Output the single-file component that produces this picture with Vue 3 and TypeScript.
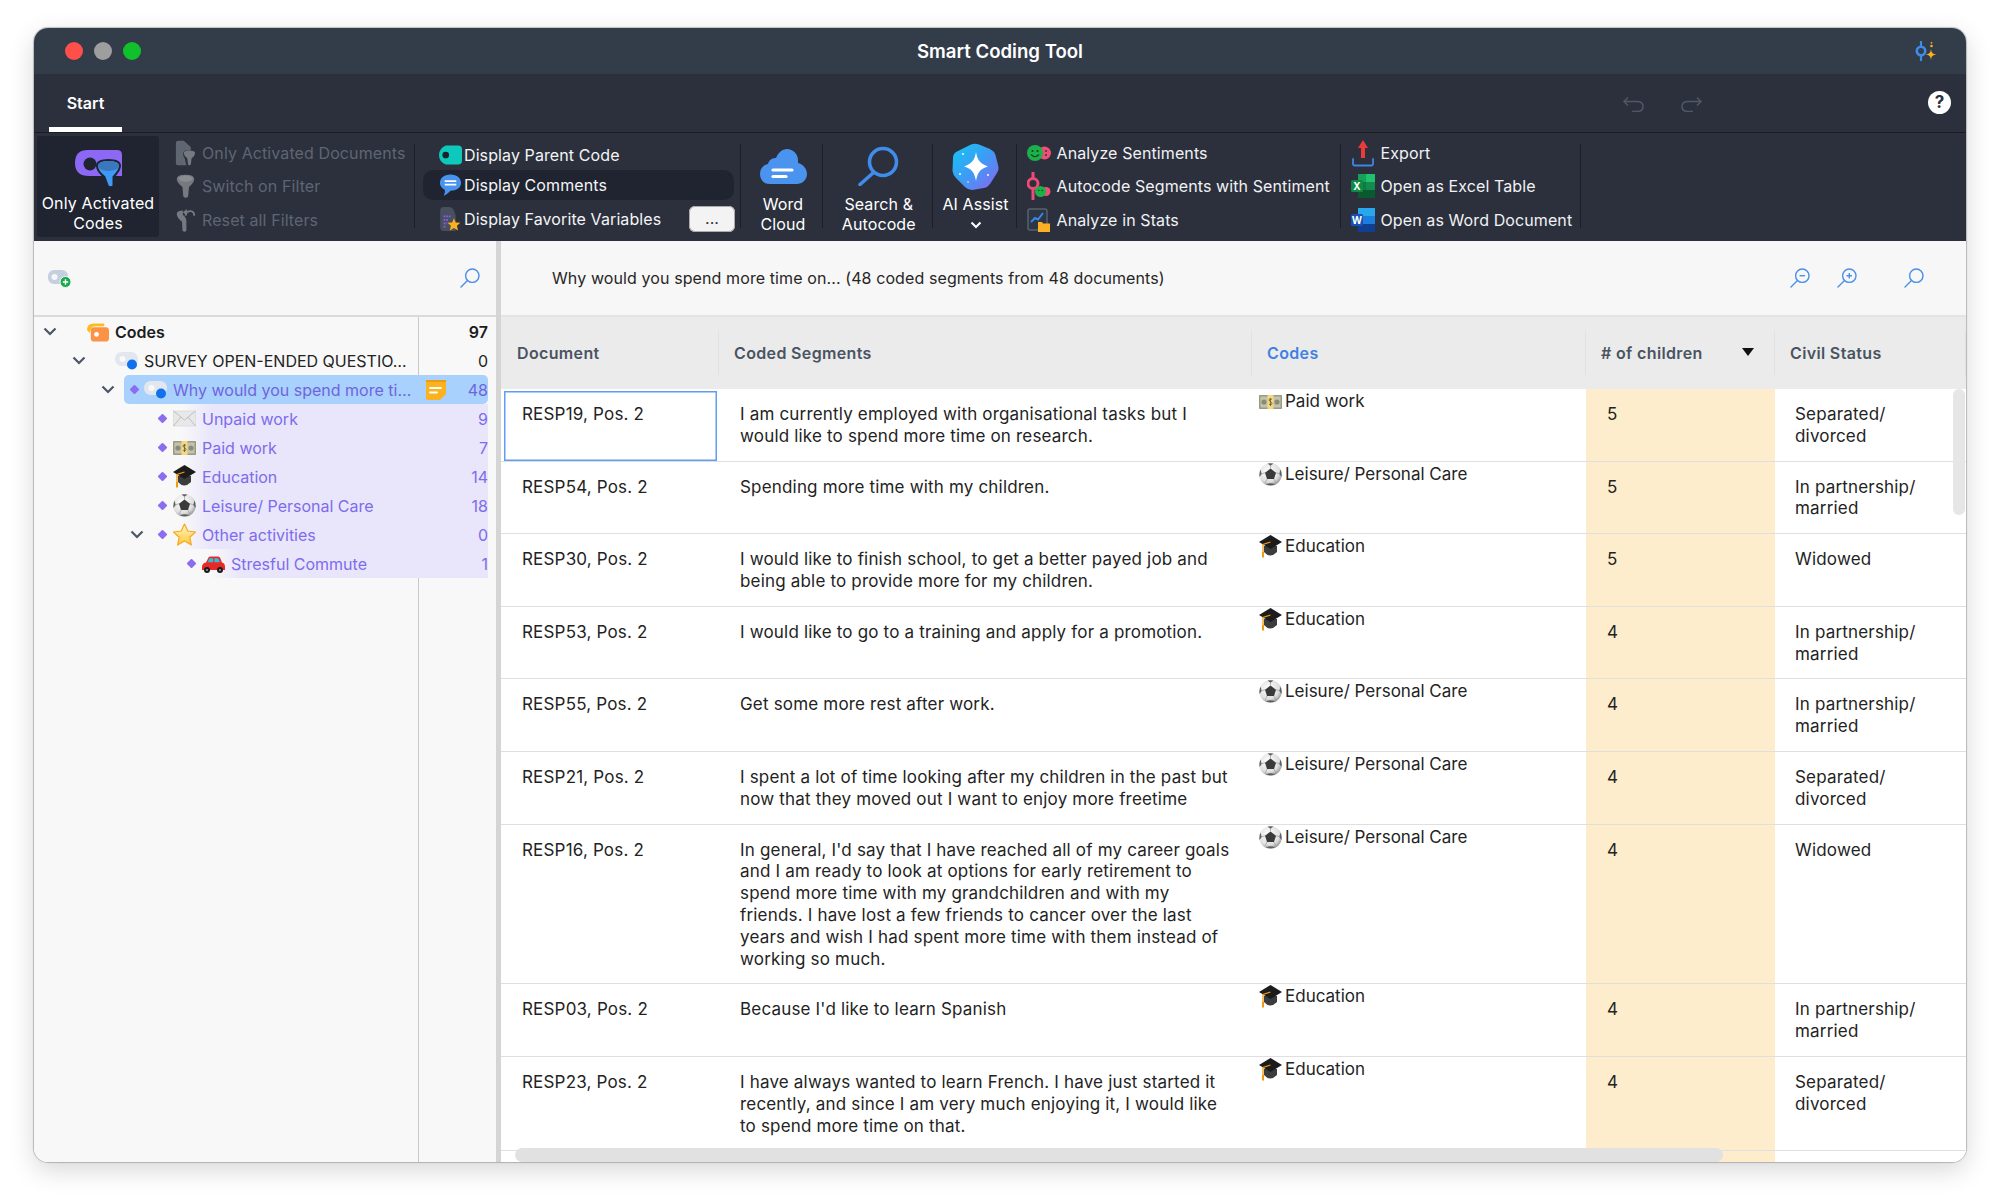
<script setup lang="ts">
interface Row { doc: string; text: string; code: string; icon: string; n: number; civil: string }
interface Node { label: string; level: number; icon: string; count: number; chevron?: boolean; diamond?: boolean; kind?: string; note?: boolean }

const rows: Row[] = [
  { doc: 'RESP19, Pos. 2', text: 'I am currently employed with organisational tasks but I would like to spend more time on research.', code: 'Paid work', icon: 'money', n: 5, civil: 'Separated/ divorced' },
  { doc: 'RESP54, Pos. 2', text: 'Spending more time with my children.', code: 'Leisure/ Personal Care', icon: 'ball', n: 5, civil: 'In partnership/ married' },
  { doc: 'RESP30, Pos. 2', text: 'I would like to finish school, to get a better payed job and being able to provide more for my children.', code: 'Education', icon: 'cap', n: 5, civil: 'Widowed' },
  { doc: 'RESP53, Pos. 2', text: 'I would like to go to a training and apply for a promotion.', code: 'Education', icon: 'cap', n: 4, civil: 'In partnership/ married' },
  { doc: 'RESP55, Pos. 2', text: 'Get some more rest after work.', code: 'Leisure/ Personal Care', icon: 'ball', n: 4, civil: 'In partnership/ married' },
  { doc: 'RESP21, Pos. 2', text: 'I spent a lot of time looking after my children in the past but now that they moved out I want to enjoy more freetime', code: 'Leisure/ Personal Care', icon: 'ball', n: 4, civil: 'Separated/ divorced' },
  { doc: 'RESP16, Pos. 2', text: "In general, I'd say that I have reached all of my career goals and I am ready to look at options for early retirement to spend more time with my grandchildren and with my friends.  I have lost a few friends to cancer over the last years and wish I had spent more time with them instead of working so much.", code: 'Leisure/ Personal Care', icon: 'ball', n: 4, civil: 'Widowed' },
  { doc: 'RESP03, Pos. 2', text: "Because I'd like to learn Spanish", code: 'Education', icon: 'cap', n: 4, civil: 'In partnership/ married' },
  { doc: 'RESP23, Pos. 2', text: 'I have always wanted to learn French. I have just started it recently, and since I am very much enjoying it, I would like to spend more time on that.', code: 'Education', icon: 'cap', n: 4, civil: 'Separated/ divorced' },
]

const nodes: Node[] = [
  { label: 'Codes', level: 0, icon: 'codes', count: 97, chevron: true, kind: 'root' },
  { label: 'SURVEY OPEN-ENDED QUESTIO…', level: 1, icon: 'tagdot', count: 0, chevron: true, kind: 'plain' },
  { label: 'Why would you spend more ti…', level: 2, icon: 'tagdot', count: 48, chevron: true, diamond: true, kind: 'sel', note: true },
  { label: 'Unpaid work', level: 3, icon: 'mail', count: 9, diamond: true, kind: 'act' },
  { label: 'Paid work', level: 3, icon: 'money', count: 7, diamond: true, kind: 'act' },
  { label: 'Education', level: 3, icon: 'cap', count: 14, diamond: true, kind: 'act' },
  { label: 'Leisure/ Personal Care', level: 3, icon: 'ball', count: 18, diamond: true, kind: 'act' },
  { label: 'Other activities', level: 3, icon: 'star', count: 0, chevron: true, diamond: true, kind: 'act' },
  { label: 'Stresful Commute', level: 4, icon: 'car', count: 1, diamond: true, kind: 'act' },
]

const filterItems = [
  { icon: 'docfilter', label: 'Only Activated Documents' },
  { icon: 'filter', label: 'Switch on Filter' },
  { icon: 'resetfilter', label: 'Reset all Filters' },
]
const analyzeItems = [
  { icon: 'sentiment', label: 'Analyze Sentiments' },
  { icon: 'autosent', label: 'Autocode Segments with Sentiment' },
  { icon: 'stats', label: 'Analyze in Stats' },
]
const exportItems = [
  { icon: 'export', label: 'Export', letter: '' },
  { icon: 'excel', label: 'Open as Excel Table', letter: 'X' },
  { icon: 'word', label: 'Open as Word Document', letter: 'W' },
]
</script>

<template>
  <div class="page">
    <svg class="defs" aria-hidden="true">
      <defs>
        <linearGradient id="aiGrad" x1="0" y1="0" x2="1" y2="1">
          <stop offset="0" stop-color="#12c6f4" />
          <stop offset=".5" stop-color="#3d9cf5" />
          <stop offset="1" stop-color="#8d62f0" />
        </linearGradient>
        <radialGradient id="ballGrad" cx=".4" cy=".35" r=".75">
          <stop offset="0" stop-color="#ffffff" />
          <stop offset=".65" stop-color="#dedede" />
          <stop offset="1" stop-color="#7f7f7f" />
        </radialGradient>
        <linearGradient id="starGrad" x1="0" y1="0" x2="0" y2="1">
          <stop offset="0" stop-color="#fff6c4" />
          <stop offset="1" stop-color="#fdc83a" />
        </linearGradient>
      </defs>
      <symbol id="activated" viewBox="0 0 47 37">
        <path d="M13 0H42Q47 0 47 5V26H14Q0 26 0 13Q0 0 13 0Z" fill="#8c68f5" />
        <circle cx="15" cy="14" r="6.5" fill="#1f2430" />
        <path d="M22 16Q22 10 33.5 10Q45 10 45 16Q45 20 38.5 27V36Q36 38 33 36.500L29.500 27Q22 21 22 16Z" fill="#3f9af6" stroke="#1f2430" stroke-width="2" />
        <ellipse cx="33.500" cy="16" rx="10.500" ry="5" fill="#3a77bd" />
      </symbol>
      <symbol id="filter" viewBox="0 0 24 28">
        <path d="M2 6Q2 1 12 1Q22 1 22 6Q22 10 16 15L15 26Q12 29 9.500 26L8.500 15Q2 10 2 6Z" fill="#767a80" />
        <ellipse cx="12" cy="5.500" rx="8" ry="3.500" fill="#8a8d92" />
      </symbol>
      <symbol id="docfilter" viewBox="0 0 24 28">
        <path d="M1 3Q1 0 4 0H10L18 7V11H12Q7 13 11 20L13 28H4Q1 28 1 25Z" fill="#5f6672" />
        <path d="M10 14Q10 11 16 11Q23 11 23 14Q23 17 19 20L18 27Q16 29 15 27L14 20Q10 17 10 14Z" fill="#767a80" />
      </symbol>
      <symbol id="resetfilter" viewBox="0 0 24 28">
        <path d="M2 7Q2 3 9 3L9 8Q12 10 13 14L13 26Q11 29 8.500 26L8 16Q2 11 2 7Z" fill="#767a80" />
        <path d="M12 9Q13 3 19 4Q22 5 22 9" fill="none" stroke="#767a80" stroke-width="2" />
        <path d="M9 5L13.500 1.500V9Z" fill="#767a80" />
      </symbol>
      <symbol id="parent" viewBox="0 0 24 20">
        <path d="M7 0H20Q24 0 24 4V16Q24 20 20 20H7Q0 17 0 10Q0 3 7 0Z" fill="#0ec9bb" />
        <circle cx="7" cy="10" r="3.500" fill="#17232b" />
      </symbol>
      <symbol id="comments" viewBox="0 0 24 24">
        <path d="M12 1C19 1 23 5 23 10S18 18 12 18C10 20 7 23 5 23C6 21 6.500 19 6 17C2 15 1 12 1 10C1 5 5 1 12 1Z" fill="#4893f0" />
        <path d="M6 8H18M6 11.500H18" stroke="#fff" stroke-width="1.800" />
      </symbol>
      <symbol id="favvars" viewBox="0 0 24 28">
        <path d="M0 4Q0 0 4 0H10Q14 0 16 4L18 10V28H4Q0 28 0 24Z" fill="#485060" />
        <path d="M4 11H12M4 15H10M4 19H8M4 23H6" stroke="#8a5ce8" stroke-width="2" stroke-dasharray="2 1" />
        <path d="M16 13L18 18L23.500 18.500L19.500 22L20.800 27.500L16 24.500L11.200 27.500L12.500 22L8.500 18.500L14 18Z" fill="#fcb01e" />
      </symbol>
      <symbol id="cloud" viewBox="0 0 47 35">
        <path d="M10 35C4 35 0 31 0 25C0 20 3 16 8 15C9 11 12 9 16 9C18 4 22 0 27 0C33 0 38 5 38 11L38 14C43 15 47 20 47 25C47 31 42 35 37 35Z" fill="#4a93ee" />
        <path d="M13 21H32" stroke="#fff" stroke-width="3.200" stroke-linecap="round" />
        <path d="M13 27.500H26" stroke="#fff" stroke-width="3.200" stroke-linecap="round" />
      </symbol>
      <symbol id="bigsearch" viewBox="0 0 41 40">
        <circle cx="25" cy="16" r="13.500" fill="none" stroke="#3f8ceb" stroke-width="3.600" />
        <path d="M15 27L2 38.500" stroke="#3f8ceb" stroke-width="3.600" stroke-linecap="round" />
      </symbol>
      <symbol id="ai" viewBox="0 0 47 47">
        <path d="M19 1.500Q23 0 27 1.500L38 6Q42 8 43.500 12L46.500 24Q47 27 45 30L38 41Q36 44 32 45L20 47Q16 47 13 44L4 35Q1 32 .5 28L1 15Q1 11 4 9Z" fill="url(#aiGrad)" />
        <path d="M24 9C25.500 17 27.500 20 36 23.500C27.500 26 25.500 30 24 38C22.500 30 20.500 26 12 23.500C20.500 20 22.500 17 24 9Z" fill="#fff" />
        <circle cx="11" cy="11" r="1" fill="#fff" />
        <circle cx="36" cy="32" r="1" fill="#fff" />
        <circle cx="8" cy="31" r="1" fill="#fff" />
        <circle cx="16" cy="39" r=".800" fill="#fff" />
      </symbol>
      <symbol id="sentiment" viewBox="0 0 24 17">
        <circle cx="17.500" cy="8.500" r="6.500" fill="#ef4f74" />
        <circle cx="19" cy="6.500" r=".9" fill="#2b303c" />
        <circle cx="19" cy="10.500" r=".9" fill="#2b303c" />
        <circle cx="8" cy="8.500" r="8" fill="#1cb04a" />
        <circle cx="5.500" cy="6.500" r="1.100" fill="#11461f" />
        <circle cx="10.500" cy="6.500" r="1.100" fill="#11461f" />
        <path d="M4 10Q8 14.500 12 10" fill="none" stroke="#11461f" stroke-width="1.200" />
      </symbol>
      <symbol id="autosent" viewBox="0 0 24 28">
        <path d="M6 0V6M6 17V27" stroke="#ed4a77" stroke-width="3" stroke-linecap="round" />
        <circle cx="6" cy="11.500" r="5" fill="none" stroke="#ed4a77" stroke-width="3" />
        <circle cx="19" cy="19.500" r="4.500" fill="#ef4f74" />
        <circle cx="13.500" cy="19.500" r="5.500" fill="#1cb04a" />
        <circle cx="11.800" cy="18.500" r=".8" fill="#11461f" />
        <circle cx="15.200" cy="18.500" r=".8" fill="#11461f" />
      </symbol>
      <symbol id="stats" viewBox="0 0 24 24">
        <rect x="1" y="1" width="19" height="21" rx="2" fill="#2c3644" stroke="#58606e" stroke-width="1.500" />
        <path d="M4 14L8 10L11 11.500L16 5" fill="none" stroke="#3d86e6" stroke-width="2" />
        <path d="M11 14H15L16 15.500H23V24H11Z" fill="#fcb124" />
      </symbol>
      <symbol id="export" viewBox="0 0 24 28">
        <path d="M12 1L17 9H14V19H10V9H7Z" fill="#ea3b3b" />
        <path d="M2 20V25Q2 26.500 3.500 26.500H20.500Q22 26.500 22 25V20" fill="none" stroke="#3f86e4" stroke-width="1.800" stroke-linecap="round" />
      </symbol>
      <symbol id="excel" viewBox="0 0 24 28">
        <path d="M7 4Q7 2 9 2H22Q24 2 24 4V24Q24 26 22 26H9Q7 26 7 24Z" fill="#107c41" />
        <rect x="15" y="2" width="9" height="8" fill="#21c26f" />
        <rect x="7" y="2" width="8" height="8" fill="#17a05a" />
        <rect x="15" y="10" width="9" height="8" fill="#138a4e" />
        <rect x="7" y="18" width="17" height="8" fill="#0a5a30" />
        <rect x="0" y="8" width="12" height="12" rx="1.500" fill="#0e8a46" />
      </symbol>
      <symbol id="word" viewBox="0 0 24 28">
        <path d="M7 4Q7 2 9 2H22Q24 2 24 4V24Q24 26 22 26H9Q7 26 7 24Z" fill="#185abd" />
        <rect x="7" y="2" width="17" height="8" fill="#28a8ea" />
        <rect x="7" y="10" width="17" height="8" fill="#1a7fdc" />
        <rect x="7" y="18" width="17" height="8" fill="#103f91" />
        <rect x="0" y="8" width="12" height="12" rx="1.500" fill="#1551b8" />
      </symbol>
      <symbol id="search" viewBox="0 0 20 20">
        <circle cx="12.300" cy="7.700" r="6.700" fill="none" stroke="#4a8fe8" stroke-width="1.400" />
        <path d="M7.500 12.500L1 19" stroke="#4a8fe8" stroke-width="1.400" stroke-linecap="round" />
      </symbol>
      <symbol id="zoomout" viewBox="0 0 20 20">
        <circle cx="12.300" cy="7.700" r="6.700" fill="none" stroke="#4a8fe8" stroke-width="1.400" />
        <path d="M7.500 12.500L1 19" stroke="#4a8fe8" stroke-width="1.400" stroke-linecap="round" />
        <path d="M9.500 7.700H15" stroke="#4a8fe8" stroke-width="1.400" />
      </symbol>
      <symbol id="zoomin" viewBox="0 0 20 20">
        <circle cx="12.300" cy="7.700" r="6.700" fill="none" stroke="#4a8fe8" stroke-width="1.400" />
        <path d="M7.500 12.500L1 19" stroke="#4a8fe8" stroke-width="1.400" stroke-linecap="round" />
        <path d="M9.500 7.700H15M12.300 5V10.400" stroke="#4a8fe8" stroke-width="1.400" />
      </symbol>
      <symbol id="addcode" viewBox="0 0 24 19">
        <rect x="0" y="1" width="20" height="14" rx="6" fill="#c4cfdf" />
        <circle cx="6.500" cy="8" r="3" fill="#f7f7f7" />
        <circle cx="17.500" cy="13" r="5.500" fill="#19a750" stroke="#f7f7f7" stroke-width="1" />
        <path d="M14.800 13H20.200M17.500 10.300V15.700" stroke="#fff" stroke-width="1.400" />
      </symbol>
      <symbol id="codes" viewBox="0 0 24 20">
        <path d="M1 8Q1 1 8 1H19V4H9Q5 4 4 11Z" fill="#fdbb1c" />
        <rect x="5" y="5" width="19" height="15" rx="3.500" fill="#fb9244" />
        <circle cx="11" cy="12.500" r="2.500" fill="#fff" />
      </symbol>
      <symbol id="tagdot" viewBox="0 0 23 18">
        <rect x="0" y="0" width="23" height="14" rx="6.500" fill="#e2e6ee" />
        <circle cx="7.500" cy="7" r="3" fill="#f9f9f9" />
        <circle cx="17" cy="12.500" r="5" fill="#0f71ee" />
      </symbol>
      <symbol id="note" viewBox="0 0 20 20">
        <path d="M2 0H18Q20 0 20 2V14L14 20H2Q0 20 0 18V2Q0 0 2 0Z" fill="#fbb21f" />
        <path d="M0 0H20V2H0Z" fill="#ee9c12" />
        <path d="M4 8H15M4 12.500H11" stroke="#fff" stroke-width="1.800" stroke-linecap="round" />
      </symbol>
      <symbol id="mail" viewBox="0 0 23 23">
        <rect x=".5" y="4" width="22" height="15" fill="#e8e8e8" stroke="#d2d2d2" stroke-width=".6" />
        <path d="M.5 4L11.500 13L22.500 4M.5 19L8 10M22.500 19L15 10" fill="none" stroke="#b5b5b5" stroke-width=".8" />
      </symbol>
      <symbol id="money" viewBox="0 0 23 23">
        <rect x="0" y="5" width="23" height="14" rx=".8" fill="#9a9a83" />
        <rect x="1.500" y="6.500" width="20" height="11" fill="#c3c2ab" />
        <circle cx="5" cy="12" r="2.600" fill="#8b8b75" />
        <circle cx="18" cy="12" r="2.600" fill="#8b8b75" />
        <rect x="8.500" y="5" width="6" height="14" fill="#f4d77f" />
        <path d="M13 9.500C12 8.500 10 8.500 10 10C10 11.800 13 11.500 13 13.500C13 15 11 15 10 14M11.500 8V16" fill="none" stroke="#5f5a3a" stroke-width=".8" />
      </symbol>
      <symbol id="cap" viewBox="0 0 23 23">
        <path d="M5 11V17Q11 24 18 17V11Z" fill="#3c3c3c" />
        <path d="M11.500 0L23 7L11.500 14L0 7Z" fill="#1c1c1c" />
        <path d="M11.500 7L4 9.500V18" fill="none" stroke="#f09a12" stroke-width="1.300" />
        <path d="M4 17V22.500" stroke="#f09a12" stroke-width="2" />
      </symbol>
      <symbol id="ball" viewBox="0 0 23 23">
        <circle cx="11.500" cy="11.500" r="11.200" fill="url(#ballGrad)" />
        <path d="M11.500 5.500L17 9.700L15 16H8L6 9.700Z" fill="#3a3a3a" />
        <path d="M8.500 .6Q11.500 .1 14.500 .6L11.500 2.800ZM21.500 6.500Q23 10 22.500 14L20.300 11ZM1.500 6.500Q0 10 .5 14L2.700 11ZM6.500 21Q11.500 23.500 16.500 21L11.500 20.300Z" fill="#5e5e5e" />
        <path d="M11.500 2.800V5.500M17 9.700L20.300 10.800M6 9.700L2.700 10.800M15 16L16.800 20M8 16L6.200 20" stroke="#8f8f8f" stroke-width=".6" />
      </symbol>
      <symbol id="star" viewBox="0 0 23 23">
        <path d="M11.500 1L14.800 8L22.500 9L16.800 14.200L18.400 22L11.500 18L4.600 22L6.200 14.200L.5 9L8.200 8Z" fill="url(#starGrad)" stroke="#f4a91f" stroke-width="1.200" stroke-linejoin="round" />
      </symbol>
      <symbol id="car" viewBox="0 0 23 23">
        <path d="M0 15Q0 11 4 10.500L6.500 5.500Q7 4.500 9 4.500H15.500Q17 4.500 18 5.500L20 10.500Q23 11 23 15V18H0Z" fill="#e62a2a" />
        <path d="M7.500 6.200H11.200V10.300H5.700ZM12.400 6.200H16L18 10.300H12.400Z" fill="#39bcd6" />
        <circle cx="5" cy="18" r="3" fill="#1a1a1a" />
        <circle cx="18" cy="18" r="3" fill="#1a1a1a" />
        <circle cx="5" cy="18" r="1.100" fill="#999" />
        <circle cx="18" cy="18" r="1.100" fill="#999" />
      </symbol>
      <symbol id="aitop" viewBox="0 0 22 20">
        <path d="M6 0V5M6 15V20" stroke="#3f8bea" stroke-width="2.200" stroke-linecap="round" />
        <circle cx="6" cy="10" r="4.200" fill="none" stroke="#3f8bea" stroke-width="2.600" />
        <path d="M16 8C16.500 12 17.500 13 21.500 13.500C17.500 14 16.500 15 16 19C15.500 15 14.500 14 10.500 13.500C14.500 13 15.500 12 16 8Z" fill="#fbb21f" />
        <circle cx="16.500" cy="5" r="1.300" fill="#fbb21f" />
        <circle cx="16.500" cy="1.800" r=".9" fill="#fbb21f" />
      </symbol>
    </svg>

    <div class="window">
      <header class="titlebar">
        <div class="lights"><i class="red"></i><i class="gray"></i><i class="green"></i></div>
        <div class="title">Smart Coding Tool</div>
        <svg class="aitop"><use href="#aitop" /></svg>
      </header>

      <nav class="tabbar">
        <div class="tab">Start</div>
        <div class="history">
          <svg viewBox="0 0 21 15" class="hist"><path d="M1 4.500H14Q20 4.500 20 9.500Q20 14.500 14 14.500H9M5 .5L1 4.500L5 8.500" fill="none" stroke="#505765" stroke-width="1.500" /></svg>
          <svg viewBox="0 0 21 15" class="hist"><path d="M20 4.500H7Q1 4.500 1 9.500Q1 14.500 7 14.500H12M16 .5L20 4.500L16 8.500" fill="none" stroke="#505765" stroke-width="1.500" /></svg>
        </div>
        <div class="help">?</div>
      </nav>

      <section class="ribbon">
        <button class="bigbtn">
          <svg class="ic-activated"><use href="#activated" /></svg>
          <span>Only Activated<br />Codes</span>
        </button>

        <div class="list list-filter">
          <div v-for="it in filterItems" :key="it.label" class="li off">
            <svg class="ic-li-off"><use :href="'#' + it.icon" /></svg>{{ it.label }}
          </div>
        </div>
        <i class="sep"></i>

        <div class="display">
          <div class="dr"><svg class="ic-dr"><use href="#parent" /></svg>Display Parent Code</div>
          <div class="dr on"><svg class="ic-dr"><use href="#comments" /></svg>Display Comments</div>
          <div class="dr last">
            <svg class="ic-dr"><use href="#favvars" /></svg>Display Favorite Variables
            <span class="more">...</span>
          </div>
        </div>
        <i class="sep"></i>

        <div class="tool t-word">
          <div class="tool-ic"><svg class="ic-cloud"><use href="#cloud" /></svg></div>
          <span>Word<br />Cloud</span>
        </div>
        <i class="sep"></i>
        <div class="tool t-search">
          <div class="tool-ic"><svg class="ic-bs"><use href="#bigsearch" /></svg></div>
          <span>Search &amp;<br />Autocode</span>
        </div>
        <i class="sep"></i>
        <div class="tool t-ai">
          <div class="tool-ic"><svg class="ic-ai"><use href="#ai" /></svg></div>
          <span>AI Assist</span>
          <svg class="drop" viewBox="0 0 12 8"><path d="M1.500 1.500L6 6L10.500 1.500" fill="none" stroke="#fff" stroke-width="2" /></svg>
        </div>
        <i class="sep"></i>

        <div class="list list-analyze">
          <div v-for="it in analyzeItems" :key="it.label" class="li">
            <svg class="ic-li"><use :href="'#' + it.icon" /></svg>{{ it.label }}
          </div>
        </div>
        <i class="sep"></i>
        <div class="list list-export">
          <div v-for="it in exportItems" :key="it.label" class="li">
            <svg class="ic-li" viewBox="0 0 24 28">
              <use :href="'#' + it.icon" width="24" height="28" />
              <text v-if="it.letter" x="6" y="17.500" class="lg" text-anchor="middle">{{ it.letter }}</text>
            </svg>{{ it.label }}
          </div>
        </div>
        <i class="sep"></i>
      </section>

      <div class="panes">
        <aside class="left">
          <div class="left-bar">
            <svg class="ic-add"><use href="#addcode" /></svg>
            <svg class="ic-search"><use href="#search" /></svg>
          </div>
          <div class="tree">
            <i class="treeline"></i>
            <div v-for="n in nodes" :key="n.label" class="tr" :style="{ paddingLeft: n.level * 29 + 'px' }">
              <div class="chev">
                <svg v-if="n.chevron" viewBox="0 0 14 9"><path d="M1.500 1.500L7 7L12.500 1.500" fill="none" stroke="#4c5666" stroke-width="2.200" /></svg>
              </div>
              <div class="body" :class="n.kind">
                <div class="dia"><i v-if="n.diamond"></i></div>
                <svg class="emoji"><use :href="'#' + n.icon" /></svg>
                <div class="lbl">{{ n.label }}</div>
                <svg v-if="n.note" class="note"><use href="#note" /></svg>
                <div class="cnt">{{ n.count }}</div>
              </div>
            </div>
          </div>
        </aside>

        <i class="split"></i>

        <main class="right">
          <div class="right-bar">
            <div class="caption">Why would you spend more time on... (48 coded segments from 48 documents)</div>
            <svg class="ic-search rb1"><use href="#zoomout" /></svg>
            <svg class="ic-search rb2"><use href="#zoomin" /></svg>
            <svg class="ic-search rb3"><use href="#search" /></svg>
          </div>

          <div class="thead grid">
            <div class="th">Document</div>
            <div class="th">Coded Segments</div>
            <div class="th blue">Codes</div>
            <div class="th">
              # of children
              <svg class="sort" viewBox="0 0 12 8"><path d="M0 0H12L6 8Z" fill="#111" /></svg>
            </div>
            <div class="th">Civil Status</div>
          </div>

          <div class="tbody">
            <div v-for="(r, i) in rows" :key="r.doc" class="grid row">
              <div class="td doc" :class="{ focus: i === 0 }">{{ r.doc }}</div>
              <div class="td seg">{{ r.text }}</div>
              <div class="td code">
                <svg class="code-ic"><use :href="'#' + r.icon" /></svg>{{ r.code }}
              </div>
              <div class="td num">{{ r.n }}</div>
              <div class="td civil">{{ r.civil }}</div>
            </div>
            <div class="grid row tail"><div></div><div></div><div></div><div class="num"></div><div></div></div>
            <i class="vscroll"></i>
            <i class="hscroll"></i>
          </div>
        </main>
      </div>
    </div>
  </div>
</template>

<style>
html, body { margin: 0; background: #fff; }
</style>

<style scoped>
* { box-sizing: border-box; }
.page { width: 2000px; height: 1202px; padding: 28px 34px 40px; background: #fff; font-family: Inter, "Liberation Sans", sans-serif; font-size: 16px; color: #232323; overflow: hidden; }
.defs { position: absolute; width: 0; height: 0; }
.lg { font: 700 10px Inter, sans-serif; fill: #fff; letter-spacing: 0; }
.window { height: 1134px; display: flex; flex-direction: column; border-radius: 14px; overflow: hidden; background: #f8f8f8; box-shadow: 0 0 1px 1px rgba(0,0,0,.22), 0 8px 26px rgba(0,0,0,.16); }

.titlebar { flex: none; height: 46px; background: #333c49; display: flex; align-items: center; position: relative; justify-content: center; }
.lights { position: absolute; left: 31px; top: 14px; display: flex; gap: 11px; }
.lights i { width: 18px; height: 18px; border-radius: 50%; }
.red { background: #ff4f4a; } .gray { background: #9e9e9e; } .green { background: #10c12c; }
.title { color: #fff; font-weight: 600; font-size: 18.600px; }
.aitop { position: absolute; left: 1881px; top: 13px; width: 22px; height: 20px; }

.tabbar { flex: none; height: 59px; background: #2b303c; border-bottom: 1px solid #191c23; display: flex; position: relative; }
.tab { margin-left: 15px; width: 73px; height: 58px; display: flex; align-items: center; justify-content: center; padding-top: 5px; color: #fff; font-weight: 600; font-size: 16px; border-bottom: 5px solid #fff; }
.history { margin-left: auto; margin-right: 264px; display: flex; gap: 37px; padding-top: 23px; }
.hist { width: 21px; height: 15px; }
.help { position: absolute; right: 15px; top: 17px; width: 23px; height: 23px; border-radius: 50%; background: #fff; color: #2b303c; font-weight: 700; font-size: 17px; text-align: center; line-height: 23px; }

.ribbon { flex: none; height: 108px; background: #2b303c; display: flex; align-items: flex-start; color: #fff; font-size: 16px; letter-spacing: .1px; }
.sep { flex: none; width: 1px; height: 84px; margin-top: 11px; background: #1c1f27; }
.bigbtn { flex: none; margin: 3px 0 0 3px; width: 122px; height: 101px; background: #1f2430; border: 0; border-radius: 3px; color: #fff; font: inherit; letter-spacing: .15px; line-height: 19.500px; display: flex; flex-direction: column; align-items: center; padding: 14px 0 0; }
.ic-activated { width: 47px; height: 37px; margin-bottom: 7px; }
.list { padding-top: 3px; }
.list-filter { width: 255px; padding-left: 16px; }
.list-analyze { width: 323px; padding-left: 10px; }
.list-export { width: 239px; padding-left: 10px; }
.li { height: 33.500px; display: flex; align-items: center; white-space: nowrap; color: #f1f2f4; }
.li.off { color: #5f6573; }
.ic-li { width: 24px; height: 28px; margin-right: 6px; flex: none; }
.ic-li-off { width: 21px; height: 26px; margin-right: 6px; flex: none; }

.display { width: 325px; padding-top: 7px; }
.dr { height: 30px; display: flex; align-items: center; white-space: nowrap; color: #f4f5f6; margin-left: 8px; padding-left: 16px; margin-right: 6px; border-radius: 10px; }
.dr.on { background: #1f2430; }
.dr.last { margin-top: 4px; margin-right: 5px; }
.ic-dr { width: 23px; height: 24px; margin-right: 2px; flex: none; }
.more { margin-left: auto; width: 46px; height: 26px; border-radius: 6px; background: #f3f3f3; color: #333; text-align: center; line-height: 24px; box-shadow: 0 0 0 1px #aaa inset; }

.tool { display: flex; flex-direction: column; align-items: center; line-height: 19.500px; text-align: center; padding-top: 5px; padding-left: 3px; }
.tool > span { padding-top: 1px; }
.tool-ic { height: 56px; display: flex; align-items: center; justify-content: center; }
.t-word { width: 81px; } .t-search { width: 108.500px; } .t-ai { width: 83px; }
.ic-cloud { width: 47px; height: 35px; }
.ic-bs { width: 41px; height: 40px; }
.ic-ai { width: 47px; height: 47px; }
.drop { width: 12px; height: 8px; margin-top: 6px; }

.panes { flex: 1; min-height: 0; display: flex; }
.left { flex: none; width: 462px; display: flex; flex-direction: column; background: #f8f8f8; }
.split { flex: none; width: 5px; background: #d5d5d5; }
.right { flex: 1; min-width: 0; display: flex; flex-direction: column; background: #fff; }

.left-bar { flex: none; height: 76px; background: #f7f7f7; border-bottom: 2px solid #dadada; display: flex; align-items: center; justify-content: space-between; padding: 0 16px 0 14px; }
.ic-add { width: 24px; height: 19px; }
.ic-search { width: 20px; height: 20px; }
.tree { flex: 1; position: relative; padding: 0 8px 0 1px; }
.treeline { position: absolute; left: 384px; top: 0; bottom: 0; width: 1px; background: #c9c9c9; }
.tr { height: 29px; display: flex; position: relative; }
.chev { flex: none; width: 29px; display: flex; align-items: center; justify-content: center; }
.chev svg { width: 14px; height: 9px; }
.body { flex: 1; min-width: 0; display: flex; align-items: center; border-radius: 0; }
.dia { flex: none; width: 22px; display: flex; justify-content: center; }
.dia i { width: 7px; height: 7px; background: #8b6ef0; transform: rotate(45deg); border-radius: 1px; }
.emoji { flex: none; width: 23px; height: 23px; margin-right: 6px; }
.lbl { white-space: nowrap; overflow: hidden; flex: 1; }
.cnt { flex: none; text-align: right; }
.note { width: 20px; height: 20px; flex: none; margin-right: 22px; }
.root { font-weight: 600; color: #1c1c1c; }
.root .emoji { height: 20px; }
.plain .emoji { height: 18px; }
.sel { background: #a9d1fd; border-radius: 5px; color: #7064dd; margin-left: 2px; }
.sel .dia { width: 20px; }
.sel .emoji { height: 18px; }
.act { color: #7d6cec; background: linear-gradient(90deg, transparent 30px, #e9e5fb 62px); }

.right-bar { flex: none; height: 76px; background: #f7f7f7; border-bottom: 2px solid #e4e4e4; display: flex; align-items: center; padding-left: 51px; }
.caption { flex: 1; color: #262626; letter-spacing: .1px; }
.rb1 { margin-right: 27px; } .rb2 { margin-right: 47px; } .rb3 { margin-right: 42px; }

.grid { display: grid; grid-template-columns: 218px 533px 334px 189px 191px; }
.thead { flex: none; height: 72px; background: #ebebeb; padding-top: 14px; }
.th { height: 44px; display: flex; align-items: center; padding-left: 15px; font-weight: 600; color: #4a5362; border-right: 1px solid #e1e1e1; letter-spacing: .35px; }
.th:first-child { padding-left: 16px; }
.th.blue { color: #4180e4; }
.sort { width: 12px; height: 8px; margin-left: auto; margin-right: 20px; margin-bottom: 2px; }

.tbody { flex: 1; min-height: 0; overflow: hidden; position: relative; background: #fff; font-size: 17px; letter-spacing: .18px; }
.row { border-bottom: 1px solid #dfdfdf; }
.td { padding: 15px 0 13px; line-height: 21.800px; color: #232323; }
.doc { padding-left: 21px; }
.focus { margin: 2px 2px 0 3px; padding: 13px 0 11px 18px; box-shadow: inset 0 0 0 1.500px #5f9ef0; }
.seg { padding-left: 21px; padding-right: 21px; }
.code { padding-top: 1px; padding-left: 7px; display: flex; align-items: flex-start; line-height: 22px; letter-spacing: 0; }
.code-ic { width: 23px; height: 23px; flex: none; margin-right: 3px; }
.num { background: #fdedcd; padding-left: 21px; }
.civil { padding-left: 20px; padding-right: 45px; }
.tail { height: 60px; border: 0; }
.vscroll { position: absolute; right: 1px; top: 0; width: 12px; height: 126px; border-radius: 6px; background: #e6e6e6; }
.hscroll { position: absolute; left: 14px; width: 1208px; bottom: 0; height: 14px; border-radius: 7px; background: #e1e1e1; }
</style>
